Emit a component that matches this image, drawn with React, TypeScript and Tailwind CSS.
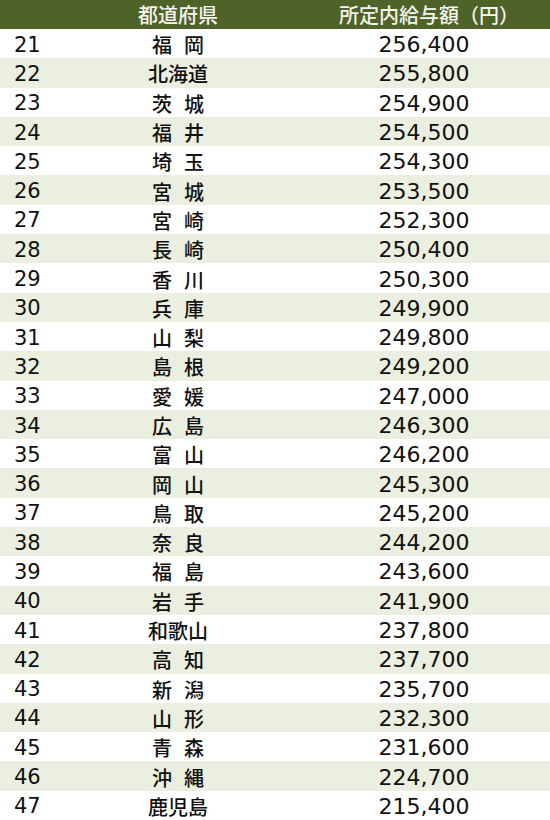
import React from 'react';

const rows: [number, string, string][] = [
  [21, '福岡', '256,400'],
  [22, '北海道', '255,800'],
  [23, '茨城', '254,900'],
  [24, '福井', '254,500'],
  [25, '埼玉', '254,300'],
  [26, '宮城', '253,500'],
  [27, '宮崎', '252,300'],
  [28, '長崎', '250,400'],
  [29, '香川', '250,300'],
  [30, '兵庫', '249,900'],
  [31, '山梨', '249,800'],
  [32, '島根', '249,200'],
  [33, '愛媛', '247,000'],
  [34, '広島', '246,300'],
  [35, '富山', '246,200'],
  [36, '岡山', '245,300'],
  [37, '鳥取', '245,200'],
  [38, '奈良', '244,200'],
  [39, '福島', '243,600'],
  [40, '岩手', '241,900'],
  [41, '和歌山', '237,800'],
  [42, '高知', '237,700'],
  [43, '新潟', '235,700'],
  [44, '山形', '232,300'],
  [45, '青森', '231,600'],
  [46, '沖縄', '224,700'],
  [47, '鹿児島', '215,400'],
];

const font = { fontFamily: '"Noto Sans CJK JP", "Noto Sans", sans-serif' };
const numFont = { fontFamily: '"DejaVu Sans", "Noto Sans CJK JP", sans-serif' };

// 2文字の県名は間をあけて表示
const Pref = ({ name }: { name: string }) =>
  name.length === 2 ? (
    <span className="flex gap-[12px]">
      <span>{name[0]}</span>
      <span>{name[1]}</span>
    </span>
  ) : (
    <span>{name}</span>
  );

export default function App() {
  return (
    <div className="w-[550px] h-[820px] bg-white overflow-hidden" style={font}>
      {/* Header */}
      <div className="flex items-center h-[29px] bg-[#4f6228] text-[#f4f4ee] text-[20px] font-medium leading-none">
        <div className="w-[118px]" />
        <div className="w-[120px] flex justify-center">都道府県</div>
        <div className="flex-1 flex justify-center pl-[70px]">所定内給与額（円）</div>
      </div>

      {/* Rows */}
      {rows.map(([rank, name, pay], i) => (
        <div
          key={rank}
          className={`flex items-center h-[29.3px] text-[20px] leading-none text-[#111111] pt-[3px] ${
            i % 2 === 1 ? 'bg-[#ebefdf]' : 'bg-white'
          }`}
        >
          <div className="w-[118px] pl-[14px] text-[21px]" style={numFont}>
            {rank}
          </div>
          <div className="w-[120px] flex justify-center font-medium">
            <Pref name={name} />
          </div>
          <div className="flex-1 flex justify-center pl-[60px] text-[22px]" style={numFont}>
            {pay}
          </div>
        </div>
      ))}
    </div>
  );
}
